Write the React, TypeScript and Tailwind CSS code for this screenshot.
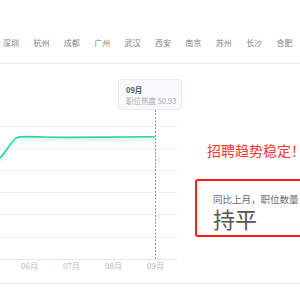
import React from 'react';

const cities = ['深圳', '杭州', '成都', '广州', '武汉', '西安', '南京', '苏州', '长沙', '合肥'];
const months = [
    { label: '06月', x: 29.5 },
    { label: '07月', x: 71.5 },
    { label: '08月', x: 113.5 },
    { label: '09月', x: 155.5 },
];
const gridY = [62, 84, 106, 128, 150, 173];

const TrendChart: React.FC = () => {
    const curve = 'M0 94 C6 88 11 78 16 74 C19 72.6 22 72.6 26 72.6 C40 72.6 50 73.5 70 73.4 C100 73.2 130 72.8 155 72.8';
    return (
        <svg width="180" height="220" viewBox="0 0 180 220" className="block">
            {gridY.map(y => (
                <line key={y} x1="0" x2="177" y1={y + 0.5} y2={y + 0.5} stroke="#f1f1f1" strokeWidth="1" />
            ))}
            <line x1="0" x2="177" y1="195.5" y2="195.5" stroke="#e6e6e6" strokeWidth="1" />
            <path d={curve} fill="none" stroke="#e2f9f1" strokeWidth="4" transform="translate(0 2)" />
            <path d={curve} fill="none" stroke="#2fd3a8" strokeWidth="1.6" />
            <line x1="155.5" x2="155.5" y1="46" y2="195" stroke="#8a8f99" strokeWidth="1" strokeDasharray="2 1.5" />
            {months.map(m => (
                <text key={m.label} x={m.x} y="205" textAnchor="middle" fontSize="8" fill="#b8b8b8"
                    fontFamily='"Noto Sans CJK SC", sans-serif'>{m.label}</text>
            ))}
        </svg>
    );
};

const App: React.FC = () => {
    return (
        <div className="w-[300px] h-[300px] overflow-hidden bg-white" style={{ fontFamily: '"Noto Sans CJK SC", "Noto Sans", sans-serif' }}>
            <div className="h-[64px] border-b border-[#ececec] pt-[38px] pl-[3px] flex gap-[14.4px] whitespace-nowrap">
                {cities.map(c => (
                    <span key={c} className="text-[8px] leading-[10px] text-[#808080]">{c}</span>
                ))}
            </div>
            <div className="flex h-[220px] border-b border-[#e8e8e8]">
                <div className="w-[180px] shrink-0 relative">
                    <TrendChart />
                    <div className="absolute left-[118px] top-[15px] w-[64px] h-[31px] rounded-[3px] border border-[#e9ebef] bg-[#f8f9fb] pl-[7px] pt-[5px]">
                        <div className="text-[7.5px] leading-[10px] font-bold text-[#555]">09月</div>
                        <div className="text-[7.5px] leading-[10px] text-[#aaa] whitespace-nowrap mt-[1px]">职位热度 50.93</div>
                    </div>
                </div>
                <div className="flex-1 min-w-0">
                    <div className="mt-[76px] ml-[27px] text-[14px] leading-[20px] text-[#ff3535] whitespace-nowrap">招聘趋势稳定！</div>
                    <div className="mt-[19px] ml-[15px] w-[140px] h-[58px] border-2 border-[#f5201c] rounded-[3px] pl-[16px] pt-[12px]">
                        <div className="text-[9.5px] leading-[12px] text-[#666] whitespace-nowrap">同比上月，职位数量</div>
                        <div className="text-[22px] leading-[22px] text-[#555] mt-[2px]">持平</div>
                    </div>
                </div>
            </div>
        </div>
    );
};

export default App;
